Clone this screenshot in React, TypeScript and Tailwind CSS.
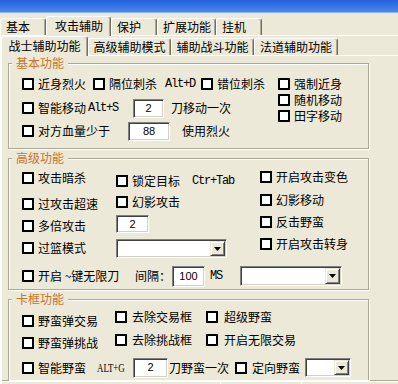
import React from "react";

type CheckProps = { label: string; className?: string; gap?: string };

function Box() {
  return <span className="block w-[12px] h-[12px] shrink-0 border-2 border-black bg-white" />;
}

function Check({ label, className = "", gap = "gap-[4px]" }: CheckProps) {
  return (
    <div className={`flex items-center h-[16px] ${gap} ${className}`}>
      <Box />
      <span className="whitespace-nowrap">{label}</span>
    </div>
  );
}

function Edit({ value, className = "" }: { value: string; className?: string }) {
  return (
    <div
      className={`shrink-0 bg-white flex items-center justify-center border border-t-[#808080] border-l-[#808080] border-b-white border-r-white shadow-[inset_1px_1px_0_#404040,inset_-1px_-1px_0_#d4d0c8] font-['Liberation_Sans',sans-serif] text-[11px] leading-[11px] ${className}`}
    >
      {value}
    </div>
  );
}

function Combo({ className = "" }: { className?: string }) {
  return (
    <div
      className={`shrink-0 bg-white flex justify-end p-[1px] border border-t-[#808080] border-l-[#808080] border-b-white border-r-white shadow-[inset_1px_1px_0_#404040,inset_-1px_-1px_0_#d4d0c8] ${className}`}
    >
      <div className="w-[15px] h-full bg-[#ece9d8] border border-t-[#ece9d8] border-l-[#ece9d8] border-b-[#404040] border-r-[#404040] shadow-[inset_1px_1px_0_#fff,inset_-1px_-1px_0_#808080] flex items-center justify-center">
        <svg width="7" height="4" viewBox="0 0 7 4">
          <path d="M0 0H7L3.5 4Z" fill="#000" />
        </svg>
      </div>
    </div>
  );
}

function Mono({ children, className = "" }: { children: React.ReactNode; className?: string }) {
  return (
    <span className={`whitespace-nowrap font-['Liberation_Mono',monospace] text-[12px] tracking-[-1.2px] ${className}`}>
      {children}
    </span>
  );
}

function Group({ title, className = "", children }: { title: string; className?: string; children: React.ReactNode }) {
  return (
    <div
      className={`relative ml-[6px] w-[361px] shrink-0 border border-[#aca899] shadow-[inset_1px_1px_0_#fff,1px_1px_0_#fff] ${className}`}
    >
      <span className="absolute left-[3px] -top-[7px] px-[4px] bg-[#ece9d8] text-[#c8742e] leading-[12px] whitespace-nowrap">
        {title}
      </span>
      {children}
    </div>
  );
}

function Tab1({ label, w, selected }: { label: string; w: string; selected?: boolean }) {
  return selected ? (
    <div
      className={`${w} relative z-10 -mb-px h-[20px] pb-[2px] pl-[8px] flex items-center bg-[#ece9d8] border-t border-l border-white border-r border-r-[#716f64] shadow-[inset_-1px_0_0_#aca899] rounded-t-[3px] whitespace-nowrap`}
    >
      {label}
    </div>
  ) : (
    <div
      className={`${w} h-[17px] pl-[5px] flex items-center border-t border-l border-white border-r border-r-[#716f64] shadow-[inset_-1px_0_0_#aca899] rounded-t-[3px] whitespace-nowrap`}
    >
      {label}
    </div>
  );
}

function Tab2({ label, w, selected }: { label: string; w: string; selected?: boolean }) {
  return selected ? (
    <div
      className={`${w} relative z-10 -mb-px h-[20px] pb-[1px] flex items-center justify-center bg-[#ece9d8] border-t border-l border-white border-r border-r-[#716f64] shadow-[inset_-1px_0_0_#aca899] rounded-t-[3px] whitespace-nowrap`}
    >
      {label}
    </div>
  ) : (
    <div
      className={`${w} h-[17px] flex items-center justify-center border-t border-l border-white border-r border-r-[#716f64] shadow-[inset_-1px_0_0_#aca899] rounded-t-[3px] whitespace-nowrap`}
    >
      {label}
    </div>
  );
}

export default function App() {
  return (
    <div className="w-[398px] h-[384px] overflow-hidden bg-[#ece9d8] text-black text-[12px] leading-[12px] font-['Noto_Sans_CJK_SC','Noto_Sans_CJK_JP',sans-serif] flex flex-col">
      {/* title bar bottom */}
      <div className="h-[13px] shrink-0 bg-linear-to-b from-[#2360dc] to-[#4b88ee] border-b border-[#8fb2f2]" />

      {/* outer tabs */}
      <div className="h-[22px] shrink-0 flex items-end">
        <Tab1 label="基本" w="w-[46px]" />
        <Tab1 label="攻击辅助" w="w-[65px]" selected />
        <Tab1 label="保护" w="w-[46px]" />
        <Tab1 label="扩展功能" w="w-[59px]" />
        <Tab1 label="挂机" w="w-[46px]" />
      </div>

      {/* outer page */}
      <div className="flex-1 flex flex-col border-t border-l border-white">
        {/* inner tabs */}
        <div className="h-[19px] shrink-0 flex items-end">
          <Tab2 label="战士辅助功能" w="w-[87px]" selected />
          <Tab2 label="高级辅助模式" w="w-[83px]" />
          <Tab2 label="辅助战斗功能" w="w-[83px]" />
          <Tab2 label="法道辅助功能" w="w-[84px]" />
        </div>

        {/* inner page */}
        <div className="flex-1 flex flex-col border-t border-l border-white">
          {/* 基本功能 */}
          <Group title="基本功能" className="mt-[7px] h-[86px]">
            <div className="flex pl-[13px]">
              <div className="w-[256px] flex flex-col pt-[10px]">
                <div className="h-[20px] flex items-center">
                  <Check label="近身烈火" className="w-[71px]" />
                  <div className="w-[108px] flex items-center">
                    <Check label="隔位刺杀" />
                    <Mono className="ml-[8px]">Alt+D</Mono>
                  </div>
                  <Check label="错位刺杀" />
                </div>
                <div className="mt-[4px] h-[20px] flex items-center">
                  <div className="w-[111px] flex items-center">
                    <Check label="智能移动" />
                    <Mono className="ml-[2px]">Alt+S</Mono>
                  </div>
                  <Edit value="2" className="w-[31px] h-[19px]" />
                  <span className="ml-[7px] whitespace-nowrap">刀移动一次</span>
                </div>
                <div className="mt-[3px] h-[20px] flex items-center">
                  <Check label="对方血量少于" className="w-[106px]" />
                  <Edit value="88" className="w-[42px] h-[19px]" />
                  <span className="ml-[12px] whitespace-nowrap">使用烈火</span>
                </div>
              </div>
              <div className="flex flex-col pt-[12px]">
                <Check label="强制近身" />
                <Check label="随机移动" />
                <Check label="田字移动" />
              </div>
            </div>
          </Group>

          {/* 高级功能 */}
          <Group title="高级功能" className="mt-[9px] h-[132px]">
            <div className="flex pl-[13px]">
              <div className="w-[94px] flex flex-col pt-[11px]">
                <Check label="攻击暗杀" />
                <Check label="过攻击超速" className="mt-[10px]" />
                <Check label="多倍攻击" className="mt-[6px]" />
                <Check label="过篮模式" className="mt-[6px]" />
              </div>
              <div className="w-[144px] flex flex-col pt-[14px]">
                <div className="h-[16px] flex items-center">
                  <Check label="锁定目标" />
                  <Mono className="ml-[12px]">Ctr+Tab</Mono>
                </div>
                <Check label="幻影攻击" className="mt-[5px]" />
                <Edit value="2" className="mt-[5px] w-[33px] h-[18px]" />
                <Combo className="mt-[6px] w-[111px] h-[19px]" />
              </div>
              <div className="flex flex-col pt-[10px]">
                <Check label="开启攻击变色" />
                <Check label="幻影移动" className="mt-[7px]" />
                <Check label="反击野蛮" className="mt-[6px]" />
                <Check label="开启攻击转身" className="mt-[6px]" />
              </div>
            </div>
            <div className="mt-[6px] h-[24px] flex items-center pl-[13px]">
              <Check label="开启 ~键无限刀" className="w-[113px]" />
              <span className="w-[36px] whitespace-nowrap">间隔：</span>
              <Edit value="100" className="ml-[1px] w-[33px] h-[21px]" />
              <Mono className="ml-[5px]">MS</Mono>
              <Combo className="ml-[18px] w-[102px] h-[20px]" />
            </div>
          </Group>

          {/* 卡框功能 */}
          <Group title="卡框功能" className="mt-[9px] h-[81px] border-b-0">
            <div className="flex pl-[13px]">
              <div className="w-[93px] flex flex-col pt-[13px]">
                <Check label="野蛮弹交易" />
                <Check label="野蛮弹挑战" className="mt-[6px]" />
              </div>
              <div className="w-[91px] flex flex-col pt-[9px]">
                <Check label="去除交易框" gap="gap-[5px]" />
                <Check label="去除挑战框" gap="gap-[5px]" className="mt-[7px]" />
              </div>
              <div className="flex flex-col pt-[9px]">
                <Check label="超级野蛮" gap="gap-[6px]" />
                <Check label="开启无限交易" gap="gap-[6px]" className="mt-[7px]" />
              </div>
            </div>
            <div className="mt-[6px] h-[21px] flex items-center pl-[13px]">
              <Check label="智能野蛮" className="w-[75px]" />
              <span className="w-[36px] shrink-0 whitespace-nowrap">
                <span className="inline-block font-['Liberation_Serif',serif] text-[13px] leading-[12px] scale-x-[0.68] origin-left">ALT+G</span>
              </span>
              <Edit value="2" className="w-[35px] h-[20px]" />
              <span className="ml-[1px] w-[66px] whitespace-nowrap">刀野蛮一次</span>
              <Check label="定向野蛮" gap="gap-[5px]" className="w-[70px]" />
              <Combo className="w-[46px] h-[19px]" />
            </div>
          </Group>

          {/* bottom strip */}
          <div className="h-[4px] shrink-0 flex border-t border-[#aca899]">
            <div className="w-[218px] border-t border-white" />
            <div className="w-[81px] border-t border-l border-white" />
            <div className="flex-1 border-t border-l border-white" />
          </div>
        </div>
      </div>
    </div>
  );
}
